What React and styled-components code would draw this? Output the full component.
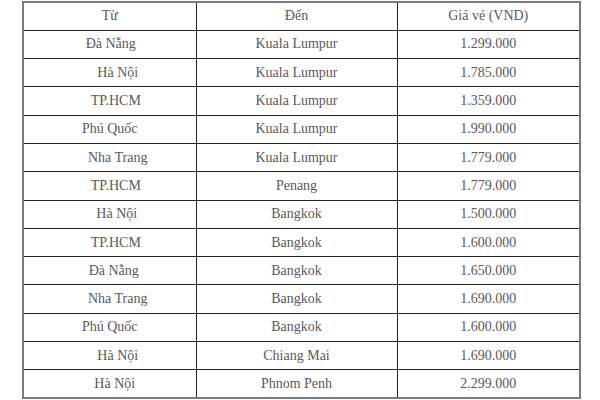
import React from 'react'
import styled, { createGlobalStyle } from 'styled-components'

const flights = [
  { from: 'Đà Nẵng', to: 'Kuala Lumpur', price: '1.299.000', shift: 1 },
  { from: 'Hà Nội', to: 'Kuala Lumpur', price: '1.785.000', shift: 8 },
  { from: 'TP.HCM', to: 'Kuala Lumpur', price: '1.359.000', shift: 6 },
  { from: 'Phú Quốc', to: 'Kuala Lumpur', price: '1.990.000', shift: 0 },
  { from: 'Nha Trang', to: 'Kuala Lumpur', price: '1.779.000', shift: 8 },
  { from: 'TP.HCM', to: 'Penang', price: '1.779.000', shift: 6 },
  { from: 'Hà Nội', to: 'Bangkok', price: '1.500.000', shift: 7 },
  { from: 'TP.HCM', to: 'Bangkok', price: '1.600.000', shift: 6 },
  { from: 'Đà Nẵng', to: 'Bangkok', price: '1.650.000', shift: 4 },
  { from: 'Nha Trang', to: 'Bangkok', price: '1.690.000', shift: 8 },
  { from: 'Phú Quốc', to: 'Bangkok', price: '1.600.000', shift: 0 },
  { from: 'Hà Nội', to: 'Chiang Mai', price: '1.690.000', shift: 8 },
  { from: 'Hà Nội', to: 'Phnom Penh', price: '2.299.000', shift: 5 },
]

function App() {
  return (
    <>
      <GlobalStyle />
      <Page>
        <PriceTable>
          <colgroup>
            <col style={{ width: '173px' }} />
            <col style={{ width: '201px' }} />
            <col style={{ width: '183px' }} />
          </colgroup>
          <tbody>
            <Row>
              <Cell>Từ</Cell>
              <Cell>Đến</Cell>
              <Cell>Giá vé (VND)</Cell>
            </Row>
            {flights.map((f, i) => (
              <Row key={i}>
                <Cell $shift={f.shift}>{f.from}</Cell>
                <Cell>{f.to}</Cell>
                <Cell>{f.price}</Cell>
              </Row>
            ))}
          </tbody>
        </PriceTable>
      </Page>
    </>
  )
}

export default App

const GlobalStyle = createGlobalStyle`
body{
  margin:0;
  background:#fff;
  font-family:"Liberation Serif","Times New Roman",serif;
}
`
const Page = styled.div`
width:600px;
height:400px;
padding:1px 0 0 22px;
box-sizing:border-box;
background:#fff;
`
const PriceTable = styled.table`
width:558px;
height:397px;
table-layout:fixed;
border-collapse:collapse;
border:2px solid #7a7a7a;
`
const Row = styled.tr`
height:28.3px;
`
const Cell = styled.td`
border:1px solid #222;
padding:0 0 0 ${p => (p.$shift || 0) * 2}px;
text-align:center;
vertical-align:middle;
font-family:"Liberation Serif","Times New Roman",serif;
font-size:14px;
color:#5a5a5a;
white-space:nowrap;
`
